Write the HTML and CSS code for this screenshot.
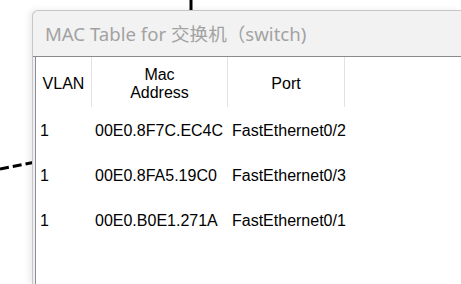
FILE: index.html
```
<!DOCTYPE html>
<html lang="en">
<head>
	<meta charset="UTF-8">
	<title>MAC Table</title>
	<link rel="stylesheet" href="styles.css">
</head>
<body>
	<svg class="links" width="461" height="284">
		<line x1="191" y1="0" x2="191" y2="12" stroke="#000" stroke-width="3"/>
		<line x1="0" y1="169" x2="36" y2="162" stroke="#000" stroke-width="3" stroke-dasharray="9 4"/>
	</svg>
	<div class="window">
		<div class="titlebar">MAC Table for 交换机（switch)</div>
		<div class="frame">
			<div class="panel">
				<div class="grid head">
					<div class="cell">VLAN</div>
					<div class="cell">Mac<br>Address</div>
					<div class="cell">Port</div>
				</div>
				<div class="grid row">
					<div class="cell c1">1</div>
					<div class="cell c2">00E0.8F7C.EC4C</div>
					<div class="cell c3">FastEthernet0/2</div>
				</div>
				<div class="grid row">
					<div class="cell c1">1</div>
					<div class="cell c2">00E0.8FA5.19C0</div>
					<div class="cell c3">FastEthernet0/3</div>
				</div>
				<div class="grid row">
					<div class="cell c1">1</div>
					<div class="cell c2">00E0.B0E1.271A</div>
					<div class="cell c3">FastEthernet0/1</div>
				</div>
			</div>
		</div>
	</div>
</body>
</html>
```

FILE: styles.css
```
html,body{
	margin:0;
	padding:0;
	background:#fff;
	overflow:hidden;
	width:461px;
	height:284px;
}
body{
	position:relative;
}
.links{
	position:absolute;
	left:0;
	top:0;
}
.window{
	position:relative;
	display:flex;
	flex-direction:column;
	margin:10px 0 0 32px;
	width:429px;
	height:274px;
	border:1px solid #c6c6c6;
	border-right:none;
	border-bottom:none;
	border-radius:6px 0 0 0;
	background:#f0f0f0;
	box-shadow:-3px 0 6px rgba(0,0,0,0.08);
	box-sizing:border-box;
}
.titlebar{
	height:46px;
	flex:none;
	display:flex;
	align-items:center;
	padding:0 0 2px 12px;
	box-sizing:border-box;
	background:#f2f2f2;
	border-bottom:1px solid #8a8a8a;
	border-radius:6px 0 0 0;
	font:18.6px "Noto Sans","Noto Sans CJK SC",sans-serif;
	color:#a2a2a2;
	white-space:nowrap;
}
.frame{
	flex:1;
	display:flex;
	padding-left:2px;
}
.panel{
	flex:1;
	background:#fff;
	border-left:1px solid #8e8e9c;
	font:16px "Liberation Sans",Arial,sans-serif;
	color:#000;
}
.grid{
	display:grid;
	grid-template-columns:56px 136px 117px;
}
.head{
	height:50px;
}
.head .cell{
	display:flex;
	align-items:center;
	justify-content:center;
	text-align:center;
	line-height:18px;
	padding-top:3px;
	border-right:1px solid #e2e2e2;
	box-sizing:border-box;
}
.row{
	height:45px;
}
.row .cell{
	display:flex;
	align-items:center;
	padding-top:2px;
	box-sizing:border-box;
	white-space:nowrap;
}
.c1{
	padding-left:4px;
}
.c2{
	padding-left:3px;
}
.c3{
	padding-left:4px;
}
```
